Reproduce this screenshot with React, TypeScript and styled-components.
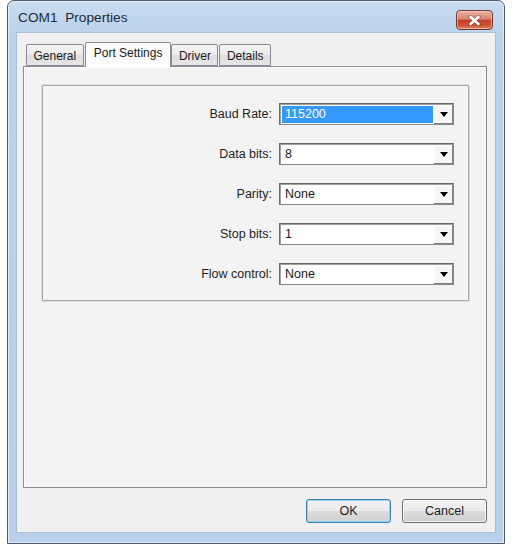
import styled, { createGlobalStyle } from 'styled-components';

const GlobalStyle = createGlobalStyle`
  html, body {
    margin: 0;
    padding: 0;
    background: #ffffff;
  }
  body {
    font-family: "Liberation Sans", Arial, sans-serif;
    color: #1b1b1b;
  }
`;

type Field = { label: string; value: string; selected?: boolean };

const fields: Field[] = [
  { label: 'Baud Rate:', value: '115200', selected: true },
  { label: 'Data bits:', value: '8' },
  { label: 'Parity:', value: 'None' },
  { label: 'Stop bits:', value: '1' },
  { label: 'Flow control:', value: 'None' },
];

const tabs = ['General', 'Port Settings', 'Driver', 'Details'];

const App = () => {
  return (
    <>
      <GlobalStyle />
      <Page>
        <Window>
          <TitleBar>
            <Title>COM1  Properties</Title>
            <CloseButton aria-label="Close">
              <svg width="13" height="11" viewBox="0 0 13 11">
                <path
                  d="M2 1.5 L11 9.5 M11 1.5 L2 9.5"
                  stroke="#5a1a10"
                  strokeWidth="4"
                  strokeLinecap="round"
                  opacity="0.35"
                />
                <path
                  d="M2.5 2 L10.5 9 M10.5 2 L2.5 9"
                  stroke="#ffffff"
                  strokeWidth="2.6"
                  strokeLinecap="round"
                />
              </svg>
            </CloseButton>
          </TitleBar>
          <Client>
            <TabStrip>
              {tabs.map((t) => (
                <Tab key={t} $active={t === 'Port Settings'}>
                  {t}
                </Tab>
              ))}
            </TabStrip>
            <TabPanel>
              <GroupBox>
                {fields.map((f) => (
                  <Row key={f.label}>
                    <Label>{f.label}</Label>
                    <Combo>
                      <ComboValue $selected={f.selected}>{f.value}</ComboValue>
                      <ComboArrow>
                        <svg width="8" height="5" viewBox="0 0 8 5">
                          <path d="M0 0 H8 L4 5 Z" fill="#000" />
                        </svg>
                      </ComboArrow>
                    </Combo>
                  </Row>
                ))}
              </GroupBox>
            </TabPanel>
            <ButtonRow>
              <Button $focused>OK</Button>
              <Button>Cancel</Button>
            </ButtonRow>
          </Client>
        </Window>
      </Page>
    </>
  );
};

const Page = styled.div`
  padding-left: 7px;
`;

const Window = styled.div`
  width: 498px;
  height: 544px;
  box-sizing: border-box;
  border: 1px solid #4d5a66;
  border-radius: 7px 7px 0 0;
  background: linear-gradient(180deg, #c9dcf0 0px, #bcd3ea 30px, #b8d0e9 100%);
  box-shadow: inset 0 0 0 1px rgba(255, 255, 255, 0.55);
  padding: 0 8px 10px 8px;
  display: flex;
  flex-direction: column;
`;

const TitleBar = styled.div`
  height: 31px;
  display: flex;
  align-items: center;
  justify-content: space-between;
  padding-left: 2px;
  padding-right: 3px;
`;

const Title = styled.span`
  font-size: 13.7px;
  white-space: pre;
  color: #1a2a3a;
  margin-top: 2px;
`;

const CloseButton = styled.div`
  width: 37px;
  height: 20px;
  box-sizing: border-box;
  border: 1px solid #6b3a34;
  border-radius: 4px;
  margin-top: 9px;
  margin-bottom: auto;
  background: linear-gradient(
    180deg,
    #e9b3a4 0%,
    #d9826d 45%,
    #c4402a 52%,
    #cc5335 80%,
    #e08a66 100%
  );
  box-shadow: inset 0 0 0 1px rgba(255, 220, 210, 0.5);
  display: flex;
  align-items: center;
  justify-content: center;
`;

const Client = styled.div`
  flex: 1;
  background: #f0f0f0;
  border: 1px solid #a8bfd6;
  padding: 9px 8px 9px 6px;
  display: flex;
  flex-direction: column;
`;

const TabStrip = styled.div`
  display: flex;
  align-items: flex-end;
  height: 24px;
  padding-left: 3px;
  position: relative;
  z-index: 1;
`;

const Tab = styled.div<{ $active?: boolean }>`
  box-sizing: border-box;
  height: ${(p) => (p.$active ? '25px' : '22px')};
  padding: ${(p) => (p.$active ? '3px 8px 0' : '4px 6.5px 0')};
  margin: ${(p) => (p.$active ? '0 0 -1px 0' : '0 1px 0 0')};
  border: 1px solid #898c95;
  border-bottom: ${(p) => (p.$active ? 'none' : '1px solid #898c95')};
  border-radius: 2px 2px 0 0;
  font-size: 12px;
  background: ${(p) =>
    p.$active
      ? '#fbfbfb'
      : 'linear-gradient(180deg, #f4f4f4 0%, #ebebeb 50%, #dedede 51%, #e6e6e6 100%)'};
  white-space: nowrap;
`;

const TabPanel = styled.div`
  flex: 1;
  border: 1px solid #898c95;
  background: #f3f3f3;
  padding: 17px 16px 0 17px;
  box-shadow: inset 1px 1px 0 #ffffff;
`;

const GroupBox = styled.div`
  border: 1px solid #d5dfe5;
  outline: 1px solid #a8a8a8;
  outline-offset: -2px;
  border-radius: 2px;
  padding: 18px 15px 16px 0;
  display: grid;
  row-gap: 18px;
`;

const Row = styled.div`
  display: grid;
  grid-template-columns: 1fr 175px;
  column-gap: 7px;
  align-items: center;
`;

const Label = styled.span`
  text-align: right;
  font-size: 12.5px;
  color: #1f1f1f;
`;

const Combo = styled.div`
  height: 22px;
  box-sizing: border-box;
  border: 1px solid #6a6a6a;
  border-right-color: #8a8a8a;
  border-bottom-color: #8a8a8a;
  box-shadow: inset 1px 1px 0 #a0a0a0;
  background: #ffffff;
  display: flex;
  padding: 2px 1px 1px 2px;
`;

const ComboValue = styled.div<{ $selected?: boolean }>`
  flex: 1;
  padding-left: 3px;
  font-size: 12.5px;
  line-height: 17px;
  background: ${(p) => (p.$selected ? '#3399ff' : 'transparent')};
  color: ${(p) => (p.$selected ? '#ffffff' : '#1b1b1b')};
  margin-right: 1px;
`;

const ComboArrow = styled.div`
  width: 19px;
  box-sizing: border-box;
  background: #f6f6f6;
  box-shadow: inset -1px -1px 0 #7f7f7f, inset 1px 1px 0 #ffffff;
  display: flex;
  align-items: center;
  justify-content: center;
  margin: -1px -1px -1px 0;
`;

const ButtonRow = styled.div`
  display: flex;
  justify-content: flex-end;
  gap: 11px;
  margin-top: 11px;
`;

const Button = styled.div<{ $focused?: boolean }>`
  width: 85px;
  height: 24px;
  box-sizing: border-box;
  border: 1px solid ${(p) => (p.$focused ? '#3c7fb1' : '#707070')};
  border-radius: 3px;
  background: linear-gradient(180deg, #f2f2f2 0%, #ebebeb 49%, #dddddd 50%, #cfcfcf 100%);
  box-shadow: ${(p) =>
    p.$focused
      ? 'inset 0 0 0 1px #8fd3f5'
      : 'inset 0 0 0 1px rgba(255, 255, 255, 0.7)'};
  display: flex;
  align-items: center;
  justify-content: center;
  font-size: 12.5px;
  color: #1b1b1b;
`;

export default App;
